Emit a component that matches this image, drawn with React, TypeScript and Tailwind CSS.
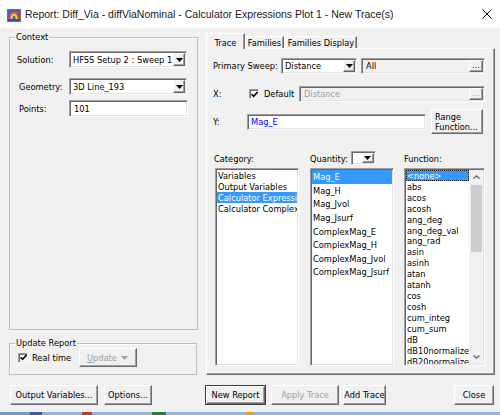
import React from "react";

const sunken =
  "border border-t-[#a0a0a0] border-l-[#a0a0a0] border-b-white border-r-white shadow-[inset_1px_1px_0_#696969,inset_-1px_-1px_0_#e3e3e3]";
const raised =
  "border border-t-white border-l-white border-b-[#696969] border-r-[#696969] shadow-[inset_-1px_-1px_0_#a0a0a0] bg-[#f0f0f0]";

function Tri({ color = "#000" }: { color?: string }) {
  return (
    <svg width="7" height="4" viewBox="0 0 7 4">
      <path d="M0 0H7L3.5 4Z" fill={color} />
    </svg>
  );
}

function ArrowBtn() {
  return (
    <div className={`${raised} w-[12px] h-full flex items-center justify-center shrink-0`}>
      <Tri />
    </div>
  );
}

function Combo({ w, text, h = "h-[17px]" }: { w: string; text: string; h?: string }) {
  return (
    <div className={`${sunken} ${w} ${h} bg-white flex items-stretch p-[1px]`}>
      <div className="flex-1 flex items-center pl-[2px] whitespace-nowrap overflow-hidden">{text}</div>
      <ArrowBtn />
    </div>
  );
}

function Check() {
  return (
    <div className={`${sunken} w-[10px] h-[10px] bg-white flex items-center justify-center shrink-0`}>
      <svg width="7" height="7" viewBox="0 0 7 7">
        <path d="M0.5 3.2L2.6 5.3L6.5 1" stroke="#000" strokeWidth="1.6" fill="none" />
      </svg>
    </div>
  );
}

function TitleIcon() {
  return (
    <svg width="14" height="13" viewBox="0 0 14 13" className="mt-[2px]">
      <rect x="0.5" y="0.5" width="13" height="12" fill="#fff" stroke="#707070" />
      <rect x="1" y="1" width="12" height="11" fill="#3b63c9" />
      <path d="M1.5 11 Q1.5 2.5 7 2.5 Q12.5 2.5 12.5 11 Z" fill="#e84a2c" />
      <path d="M3.5 11 Q3.5 4.5 7 4.5 Q10.5 4.5 10.5 11 Z" fill="#f7d23a" />
      <path d="M5.3 11 Q5.3 6.8 7 6.8 Q8.7 6.8 8.7 11 Z" fill="#3b63c9" />
      <rect x="1" y="10" width="12" height="2" fill="#2a4fb0" />
    </svg>
  );
}

function Btn({
  w,
  children,
  disabled,
  def,
}: {
  w: string;
  children: React.ReactNode;
  disabled?: boolean;
  def?: boolean;
}) {
  if (def) {
    return (
      <div className={`${w} h-[20px] border border-[#3c3c3c] shrink-0`}>
        <div className={`${raised} w-full h-full flex items-center justify-center`}>{children}</div>
      </div>
    );
  }
  return (
    <div
      className={`${raised} ${w} h-[20px] flex items-center justify-center shrink-0 ${
        disabled ? "text-[#a0a0a0]" : ""
      }`}
    >
      {children}
    </div>
  );
}

const categories = ["Variables", "Output Variables", "Calculator Expressions", "Calculator Complex Expressions"];
const quantities = [
  "Mag_E",
  "Mag_H",
  "Mag_Jvol",
  "Mag_Jsurf",
  "ComplexMag_E",
  "ComplexMag_H",
  "ComplexMag_Jvol",
  "ComplexMag_Jsurf",
];
const functions = [
  "<none>",
  "abs",
  "acos",
  "acosh",
  "ang_deg",
  "ang_deg_val",
  "ang_rad",
  "asin",
  "asinh",
  "atan",
  "atanh",
  "cos",
  "cosh",
  "cum_integ",
  "cum_sum",
  "dB",
  "dB10normalize",
  "dB20normalize",
];

export default function App() {
  return (
    <div className="w-[500px] h-[415px] bg-[#f0f0f0] overflow-hidden flex flex-col text-[9.2px] leading-none text-black font-['DejaVu_Sans_Condensed','Liberation_Sans',sans-serif]">
      {/* Title bar */}
      <div className="h-[28px] shrink-0 bg-white flex items-center pl-[7px] pr-[7px]">
        <TitleIcon />
        <span className="ml-[4px] text-[10.5px] text-[#1a1a1a] font-['Liberation_Sans',sans-serif]">
          Report: Diff_Via - diffViaNominal - Calculator Expressions Plot 1 - New Trace(s)
        </span>
        <svg className="ml-auto mr-[1px]" width="10" height="10" viewBox="0 0 10 10">
          <path d="M0.5 0.5L9.5 9.5M9.5 0.5L0.5 9.5" stroke="#000" strokeWidth="1" />
        </svg>
      </div>

      {/* Main */}
      <div className="flex pl-[9px] pt-[3px] shrink-0">
        {/* Left column */}
        <div className="w-[189px] flex flex-col shrink-0">
          <fieldset className="h-[299px] border border-[#bcbcbc] shadow-[inset_1px_1px_0_#fff] min-w-0">
            <legend className="ml-[5px] px-[1px] leading-[12px]">Context</legend>
            <div className="flex items-center h-[17px] mt-[8px]">
              <div className="w-[59px] pl-[7px]">Solution:</div>
              <Combo w="w-[118px]" text="HFSS Setup 2 : Sweep 1" />
            </div>
            <div className="flex items-center h-[17px] mt-[10px]">
              <div className="w-[59px] pl-[9px]">Geometry:</div>
              <Combo w="w-[118px]" text="3D Line_193" />
            </div>
            <div className="flex items-center h-[17px] mt-[5px]">
              <div className="w-[59px] pl-[9px]">Points:</div>
              <div className={`${sunken} w-[119px] h-[17px] bg-white flex items-center pl-[4px]`}>101</div>
            </div>
          </fieldset>

          <fieldset className="w-[188px] h-[37px] mt-[8px] border border-[#bcbcbc] shadow-[inset_1px_1px_0_#fff] min-w-0">
            <legend className="ml-[5px] px-[1px] leading-[10px]">Update Report</legend>
            <div className="flex items-center h-[19px] pl-[8px]">
              <div className="w-[61px] flex items-center">
                <Check />
                <span className="ml-[4px]">Real time</span>
              </div>
              <div className={`${raised} w-[58px] h-[19px] flex items-center pl-[7px] text-[#a0a0a0]`}>
                <span>
                  <span className="underline">U</span>pdate
                </span>
                <span className="ml-auto mr-[8px]">
                  <Tri color="#a0a0a0" />
                </span>
              </div>
            </div>
          </fieldset>
        </div>

        {/* Right column */}
        <div className="ml-[8px] w-[289px] flex flex-col mt-[2px] shrink-0">
          <div className="flex items-end h-[15px]">
            <div className="relative z-10 w-[39px] h-[16px] -mb-[1px] bg-[#f0f0f0] border-l border-t border-r border-l-white border-t-white border-r-[#696969] shadow-[inset_-1px_0_0_#a0a0a0] flex items-start justify-center pt-[4px]">
              Trace
            </div>
            <div className="w-[39px] h-[12px] bg-[#f0f0f0] border-l border-t border-r border-l-white border-t-white border-r-[#696969] shadow-[inset_-1px_0_0_#a0a0a0] flex items-center justify-center pt-[1px]">
              Families
            </div>
            <div className="ml-[1px] w-[72px] h-[12px] bg-[#f0f0f0] border-l border-t border-r border-l-white border-t-white border-r-[#696969] shadow-[inset_-1px_0_0_#a0a0a0] flex items-center justify-center pt-[1px]">
              Families Display
            </div>
          </div>

          <div className="h-[327px] border border-t-white border-l-white border-r-[#696969] border-b-[#696969] shadow-[inset_-1px_-1px_0_#a0a0a0] pl-[6px]">
            {/* Primary sweep */}
            <div className="flex items-center h-[16px] mt-[9px]">
              <div className="w-[68px]">Primary Sweep:</div>
              <Combo w="w-[76px]" h="h-[16px]" text="Distance" />
              <div className={`${sunken} ml-[4px] w-[124px] h-[16px] flex items-stretch p-[1px]`}>
                <div className="flex-1 flex items-center pl-[3px]">All</div>
                <div className={`${raised} w-[14px] flex items-center justify-center text-[#0000ff] pb-[2px]`}>...</div>
              </div>
            </div>
            {/* X */}
            <div className="flex items-center h-[16px] mt-[12px]">
              <div className="w-[36px]">X:</div>
              <div className="w-[50px] flex items-center">
                <Check />
                <span className="ml-[5px]">Default</span>
              </div>
              <div className={`${sunken} w-[186px] h-[16px] flex items-stretch p-[1px] text-[#a0a0a0]`}>
                <div className="flex-1 flex items-center pl-[3px]">Distance</div>
                <div className={`${raised} w-[14px] flex items-center justify-center pb-[2px]`}>...</div>
              </div>
            </div>
            {/* Y */}
            <div className="flex items-center h-[25px] mt-[7px]">
              <div className="w-[34px]">Y:</div>
              <div className={`${sunken} w-[179px] h-[16px] bg-white flex items-center pl-[3px] text-[#0000ff]`}>
                Mag_E
              </div>
              <div className={`${raised} ml-[5px] w-[52px] h-[25px] flex flex-col justify-center pl-[3px] leading-[10px]`}>
                <span>Range</span>
                <span>Function...</span>
              </div>
            </div>

            {/* Lists */}
            <div className="flex mt-[17px]">
              <div className="ml-[2px] w-[84px] flex flex-col">
                <div className="h-[14px] flex items-center -ml-[1px] pt-[2px]">Category:</div>
                <div className={`${sunken} mt-[3px] h-[198px] bg-white p-[1px] overflow-hidden`}>
                  {categories.map((c, i) => (
                    <div
                      key={c}
                      className={`h-[11px] flex items-center pl-[1px] whitespace-nowrap overflow-hidden ${
                        i === 2 ? "bg-[#3399ff] text-white" : ""
                      }`}
                    >
                      {c}
                    </div>
                  ))}
                </div>
              </div>

              <div className="ml-[11px] w-[84px] flex flex-col">
                <div className="h-[14px] flex items-center">
                  <span className="pt-[2px]">Quantity:</span>
                  <div className={`${sunken} ml-[3px] w-[25px] h-[14px] bg-white flex justify-end p-[1px]`}>
                    <ArrowBtn />
                  </div>
                </div>
                <div className={`${sunken} mt-[3px] h-[198px] bg-white p-[1px] overflow-hidden`}>
                  {quantities.map((q, i) => (
                    <div
                      key={q}
                      className={`h-[13.6px] flex items-center pl-[1px] whitespace-nowrap ${
                        i === 0 ? "bg-[#3399ff] text-white" : ""
                      }`}
                    >
                      {q}
                    </div>
                  ))}
                </div>
              </div>

              <div className="ml-[10px] w-[81px] flex flex-col">
                <div className="h-[14px] flex items-center pt-[2px]">Function:</div>
                <div className={`${sunken} mt-[3px] h-[198px] bg-white p-[1px] overflow-hidden flex`}>
                  <div className="flex-1 overflow-hidden">
                    {functions.map((f, i) => (
                      <div
                        key={f}
                        className={`h-[10.95px] flex items-center pl-[1px] whitespace-nowrap ${
                          i === 0 ? "bg-[#3399ff] text-white outline-dotted outline-1 -outline-offset-1 outline-[#1a1a1a]" : ""
                        }`}
                      >
                        {f}
                      </div>
                    ))}
                  </div>
                  <div className="w-[14px] bg-[#f0f0f0] flex flex-col items-center">
                    <div className="h-[14px] flex items-center justify-center">
                      <svg width="7" height="4" viewBox="0 0 7 4">
                        <path d="M0.5 3.5L3.5 0.8L6.5 3.5" stroke="#606060" strokeWidth="1.2" fill="none" />
                      </svg>
                    </div>
                    <div className="w-[11px] h-[67px] bg-[#cdcdcd] mt-[1px]" />
                    <div className="flex-1" />
                    <div className="h-[14px] flex items-center justify-center">
                      <svg width="7" height="4" viewBox="0 0 7 4">
                        <path d="M0.5 0.5L3.5 3.2L6.5 0.5" stroke="#606060" strokeWidth="1.2" fill="none" />
                      </svg>
                    </div>
                  </div>
                </div>
              </div>
            </div>
          </div>
        </div>
      </div>

      {/* Bottom buttons */}
      <div className="flex items-center mt-[10px] pl-[10px] shrink-0">
        <Btn w="w-[88px]">Output Variables...</Btn>
        <div className="ml-[6px]">
          <Btn w="w-[48px]">Options...</Btn>
        </div>
        <div className="ml-[53px]">
          <Btn w="w-[61px]" def>
            New Report
          </Btn>
        </div>
        <div className="ml-[5px]">
          <Btn w="w-[68px]" disabled>
            Apply Trace
          </Btn>
        </div>
        <div className="ml-[4px]">
          <Btn w="w-[43px]">Add Trace</Btn>
        </div>
        <div className="ml-[68px]">
          <Btn w="w-[40px]">Close</Btn>
        </div>
      </div>

      <div className="flex-1" />
      <div className="h-[3px] shrink-0 flex">
        <div className="w-[30px] bg-[#6f9bd0]" />
        <div className="w-[12px] bg-[#3a5da0]" />
        <div className="w-[40px] bg-[#8fb3dc]" />
        <div className="w-[10px] bg-[#c0392b]" />
        <div className="w-[60px] bg-[#8fb3dc]" />
        <div className="w-[14px] bg-[#2e7d32]" />
        <div className="w-[80px] bg-[#8fb3dc]" />
        <div className="w-[8px] bg-[#e0a020]" />
        <div className="flex-1 bg-[#8fb3dc]" />
      </div>
    </div>
  );
}
